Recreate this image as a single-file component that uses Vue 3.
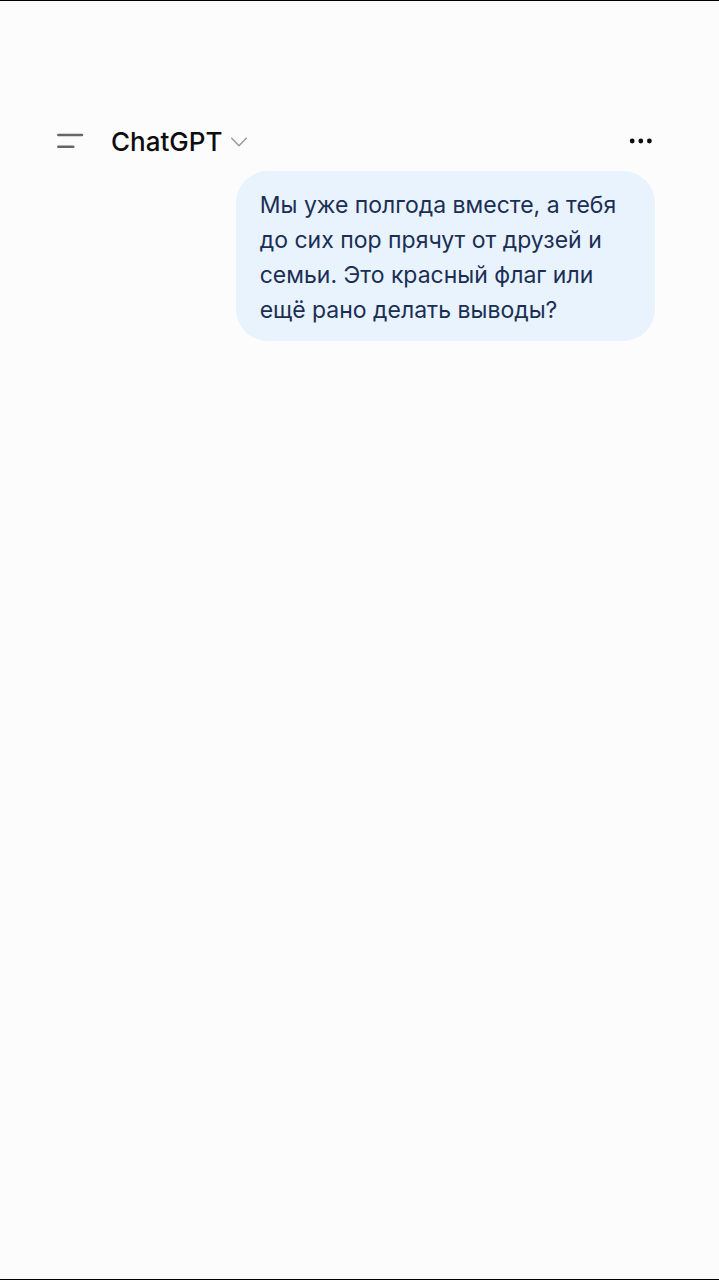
<script setup>
import { ref } from "vue";

const titulo = "ChatGPT";
const mensajes = ref([
  {
    id: 1,
    texto:
      "Мы уже полгода вместе, а тебя до сих пор прячут от друзей и семьи. Это красный флаг или ещё рано делать выводы?",
  },
]);
</script>

<template>
  <div class="chat">
    <header class="header">
      <button type="button" class="menu" aria-label="Меню">
        <svg width="28" height="20" viewBox="0 0 28 20">
          <path d="M2.3 4H26M2.3 15.8H17.3" />
        </svg>
      </button>
      <button type="button" class="model">
        <span>{{ titulo }}</span>
        <svg width="18" height="12" viewBox="0 0 18 12">
          <path d="M1.7 2.2L9 9.7L16.3 2.2" />
        </svg>
      </button>
      <button type="button" class="more" aria-label="Ещё">
        <svg width="24" height="8" viewBox="0 0 24 8">
          <circle cx="3.2" cy="4" r="2.4" />
          <circle cx="11.8" cy="4" r="2.4" />
          <circle cx="20.4" cy="4" r="2.4" />
        </svg>
      </button>
    </header>
    <main class="messages">
      <p v-for="mensaje in mensajes" :key="mensaje.id" class="bubble">
        {{ mensaje.texto }}
      </p>
    </main>
  </div>
</template>

<style>
body {
  background-color: #fcfcfc;
}
</style>

<style scoped>
.chat {
  box-sizing: border-box;
  min-height: 100vh;
  padding: 120px 64px 40px 56px;
  border-top: 1px solid #000;
  border-bottom: 1px solid #000;
  background-color: #fcfcfc;
  font-family: Inter, "Liberation Sans", sans-serif;
}

.header {
  display: flex;
  align-items: center;
  height: 40px;
}

button {
  display: flex;
  align-items: center;
  padding: 0;
  border: none;
  background: none;
  font-family: inherit;
  cursor: pointer;
}

svg {
  display: block;
}

.menu path {
  stroke: #666;
  stroke-width: 2.5;
  stroke-linecap: round;
}

.model {
  gap: 8px;
  margin-left: 27px;
  padding-top: 2px;
  color: #0d0d0d;
  font-size: 26px;
  font-weight: 500;
  line-height: 40px;

  path {
    fill: none;
    stroke: #999;
    stroke-width: 1.5;
    stroke-linecap: round;
    stroke-linejoin: round;
  }
}

.more {
  margin-left: auto;
  margin-right: 2px;
  color: #0d0d0d;

  svg {
    fill: currentColor;
  }
}

.messages {
  display: flex;
  flex-direction: column;
  align-items: flex-end;
  margin-top: 10px;
}

.bubble {
  box-sizing: border-box;
  width: 70%;
  max-width: 420px;
  margin: 0;
  padding: 17px 24px 13px;
  border-radius: 32px;
  background-color: #e8f3fd;
  color: #1b2f55;
  font-size: 23px;
  line-height: 35px;
}
</style>
